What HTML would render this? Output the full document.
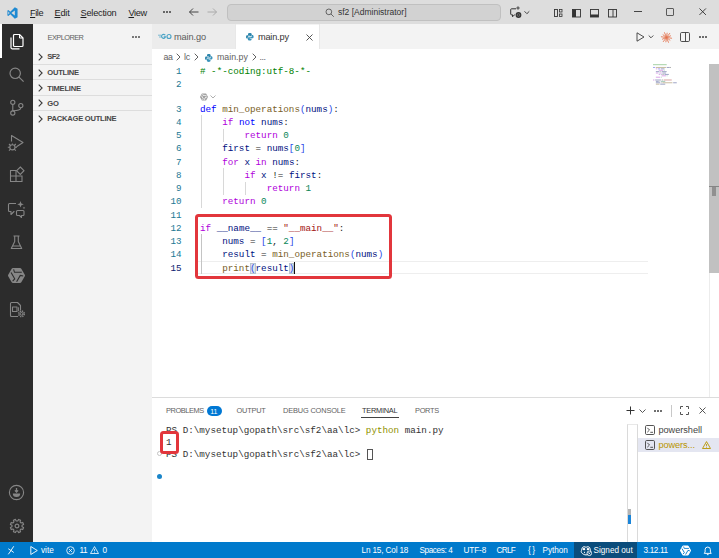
<!DOCTYPE html>
<html><head><meta charset="utf-8"><title>main.py - sf2 [Administrator]</title>
<style>
*{box-sizing:border-box;margin:0;padding:0}
html,body{width:719px;height:558px;overflow:hidden;background:#fff}
body{position:relative;font-family:"Liberation Sans",sans-serif;font-size:9px;color:#333}
.abs,.abs > *{position:absolute}
.t{position:absolute;white-space:pre;line-height:1}
svg{position:absolute;overflow:visible}
#title{left:0;top:0;width:719px;height:24.200px;background:#dddddd}
#act{left:0;top:24px;width:33px;height:518px;background:#2c2c2c}
#side{left:33px;top:24px;width:119px;height:518px;background:#f3f3f3}
#tabs{left:152px;top:24.200px;width:567px;height:24.600px;background:#f3f3f3}
#status{left:0;top:542.400px;width:719px;height:16px;background:#007acc;color:#fff}
.menu{top:8.5px;font-size:9.2px;color:#1e1e1e}
.sec{left:47.300px;font-size:7.600px;font-weight:bold;color:#474747;letter-spacing:-0.25px}
.chev{position:absolute;left:38px}
.sep{position:absolute;left:33px;width:119px;height:1px;background:#dddddd}
.code{position:absolute;left:200px;font-family:"Liberation Mono",monospace;font-size:9.250px;line-height:13.15px;white-space:pre;color:#1e1e1e;height:13.15px}
.ln{position:absolute;left:152px;width:29.5px;text-align:right;font-family:"Liberation Mono",monospace;font-size:9.2px;line-height:13.15px;color:#237893}
.k{color:#0000ff}.c{color:#af00db}.f{color:#795e26}.v{color:#001080}.n{color:#098658}.s{color:#a31515}.cm{color:#008000}.b1{color:#2748e8}.b2{color:#319331}
.bm{background:#dde4ec;outline:1px solid #b9c4d0;outline-offset:-1px}
.guide{position:absolute;width:1px;background:#d8d8d8}
.term{position:absolute;left:166px;font-family:"Liberation Mono",monospace;font-size:9.25px;line-height:12px;white-space:pre;color:#333}
.ptab{top:407px;font-size:7.4px;color:#616161;letter-spacing:-0.1px}
.st{top:546.5px;font-size:8.2px;color:#fff}
.red{position:absolute;border:3px solid #e2363c;border-radius:3.500px}
</style></head><body>
<!-- TITLE BAR -->
<div id="title" class="abs">
  <svg style="left:7px;top:6.700px" width="11" height="12" viewBox="0 0 100 100" preserveAspectRatio="none"><path d="M71 2 30 40 12 26 4 30v40l8 4 18-14 41 38 25-12V14zM12 62V38l12 12zm59 8L40 50l31-20z" fill="#1f8ad2"/></svg>
  <span class="t menu" style="left:30px;letter-spacing:-0.4px"><u>F</u>ile</span>
  <span class="t menu" style="left:54.5px;letter-spacing:-0.2px"><u>E</u>dit</span>
  <span class="t menu" style="left:80.5px;letter-spacing:-0.2px"><u>S</u>election</span>
  <span class="t menu" style="left:128.5px;letter-spacing:-0.4px"><u>V</u>iew</span>
  <svg style="left:163px;top:11.200px" width="8" height="2" viewBox="0 0 8 2" fill="#333"><circle cx="1" cy="1" r=".95"/><circle cx="4" cy="1" r=".95"/><circle cx="7" cy="1" r=".95"/></svg>
  <svg style="left:189px;top:8px" width="10" height="8" viewBox="0 0 10 8" fill="none" stroke="#444" stroke-width="1"><path d="M9.500 4h-9M4 .5l-3.500 3.500 3.500 3.500"/></svg>
  <svg style="left:206.500px;top:8px" width="10" height="8" viewBox="0 0 10 8" fill="none" stroke="#aaa" stroke-width="1"><path d="M.5 4h9M6 .5l3.500 3.500-3.500 3.500"/></svg>
  <div style="left:226.500px;top:3.500px;width:274.500px;height:17.500px;background:#d2d2d2;border:1px solid #c0c0c0;border-radius:4px"></div>
  <svg style="left:324.500px;top:7.500px" width="9.500" height="9.500" viewBox="0 0 16 16"><circle cx="6.500" cy="6.500" r="4.800" fill="none" stroke="#444" stroke-width="1.300"/><path d="M10 10l4.800 4.800" stroke="#444" stroke-width="1.300"/></svg>
  <span class="t" style="left:338px;top:8.300px;font-size:8.500px;color:#333;letter-spacing:0px">sf2 [Administrator]</span>
  <!-- right icons -->
  <svg style="left:509px;top:6px" width="24" height="13" viewBox="0 0 24 13"><path d="M7 2.800h-4.500a.8.800 0 0 0-.8.800v4.400a.8.800 0 0 0 .8.800h1v2l2-2h.5" fill="none" stroke="#333" stroke-width="1" stroke-linejoin="round"/><circle cx="9.500" cy="9" r="2.900" fill="#333"/><circle cx="9.500" cy="9" r="1.300" fill="none" stroke="#999" stroke-width=".5"/><path d="M9 .3v3.400M7.300 2h3.400" stroke="#333" stroke-width=".9"/><path d="M15.500 5.300l2.400 2.400 2.400-2.400" fill="none" stroke="#333" stroke-width=".9"/></svg>
  <svg style="left:553.500px;top:8.500px" width="9" height="9" viewBox="0 0 9 9" fill="none" stroke="#333" stroke-width=".9"><rect x=".5" y=".5" width="3" height="7"/><rect x="5.500" y=".5" width="2.500" height="2.500" stroke-width=".8"/><rect x="5.500" y="5" width="2.500" height="2.500" stroke-width=".8"/></svg>
  <svg style="left:571.500px;top:8.500px" width="9" height="9" viewBox="0 0 9 9"><rect x=".5" y=".5" width="8" height="7.500" fill="none" stroke="#333" stroke-width=".9"/><rect x=".5" y=".5" width="3.500" height="7.500" fill="#333"/></svg>
  <svg style="left:589.500px;top:8.500px" width="9" height="9" viewBox="0 0 9 9"><rect x=".5" y=".5" width="8" height="7.500" fill="none" stroke="#333" stroke-width=".9"/><rect x=".5" y="5.500" width="8" height="2.500" fill="#333"/></svg>
  <svg style="left:607.500px;top:8.500px" width="9" height="9" viewBox="0 0 9 9"><rect x=".5" y=".5" width="8" height="7.500" fill="none" stroke="#333" stroke-width=".9"/><path d="M5 .5v7.500" stroke="#333" stroke-width=".9"/></svg>
  <div style="left:634px;top:11px;width:8px;height:1px;background:#444"></div>
  <div style="left:666.300px;top:8.200px;width:7.500px;height:7.500px;border:1px solid #5a5a5a;border-radius:1px"></div>
  <svg style="left:698.700px;top:8.200px" width="7.400" height="7.400" viewBox="0 0 8 8"><path d="M.5.5l7 7M7.500.5l-7 7" stroke="#333" stroke-width="1"/></svg>
</div>
<!-- ACTIVITY BAR -->
<div id="act" class="abs">
  <div style="left:0;top:0;width:2px;height:33.700px;background:#fff"></div>
  <!-- files -->
  <svg style="left:8.500px;top:9px" width="16" height="16" viewBox="0 0 16 16" fill="none" stroke="#fff" stroke-width="1.200" stroke-linejoin="round"><path d="M5.500 1.500h5l3.500 3.500v7.500a1 1 0 0 1-1 1h-7.500a1 1 0 0 1-1-1v-10a1 1 0 0 1 1-1z"/><path d="M10.500 1.500v3.500h3.500" stroke-width="1"/><path d="M2 4.500v10a1.300 1.300 0 0 0 1.300 1.300h7.200"/></svg>
  <!-- search -->
  <svg style="left:8px;top:42px" width="17" height="17" viewBox="0 0 17 17" fill="none" stroke="#868686" stroke-width="1.200"><circle cx="7.200" cy="7.300" r="5.200"/><path d="M11 11.100l4.600 4.600"/></svg>
  <!-- scm -->
  <svg style="left:8px;top:74px" width="17" height="18" viewBox="0 0 17 18" fill="none" stroke="#868686" stroke-width="1.100"><circle cx="4.800" cy="4.300" r="2.100"/><circle cx="12.800" cy="7.600" r="2.100"/><circle cx="4.800" cy="15" r="2.100"/><path d="M4.800 6.400v6.500M12.800 9.700c0 2.500-3 2.800-8 3"/></svg>
  <!-- debug -->
  <svg style="left:7px;top:109px" width="18" height="20" viewBox="0 0 18 20" fill="none" stroke="#868686" stroke-width="1.100" stroke-linejoin="round"><path d="M4.500 8.500v-6l11.500 7-6.500 4.200"/><circle cx="5.400" cy="14.300" r="2.600"/><path d="M5.400 11.700v-1.300M2.800 14.300h-2M8 14.300h2M3.500 12.500l-1.500-1.500M7.300 12.500l1.500-1.500M3.500 16.200l-1.500 1.500M7.300 16.200l1.500 1.500"/></svg>
  <!-- extensions -->
  <svg style="left:9px;top:142px" width="16" height="16" viewBox="0 0 16 16" fill="none" stroke="#868686" stroke-width="1.100"><path d="M1.500 4.500h5.500v11h-5.500zM1.500 10h11.500v5.500h-11.500M13 10v5.500"/><path d="M11.300 1l3.700 3.700-3.700 3.700-3.700-3.700z"/></svg>
  <!-- chat sparkle -->
  <svg style="left:7px;top:175.500px" width="19" height="19" viewBox="0 0 19 19" fill="none" stroke="#868686" stroke-width="1.100" stroke-linejoin="round"><path d="M9 3.500h-6.500a1 1 0 0 0-1 1v6a1 1 0 0 0 1 1h1.500v3l3-3h.5"/><path d="M10.500 10.500h5.500a1 1 0 0 1 1 1v3a1 1 0 0 1-1 1h-1.500v2l-2-2h-2a1 1 0 0 1-1-1v-3a1 1 0 0 1 1-1z"/><path d="M13.500 1l.9 2.400 2.400.9-2.400.9-.9 2.400-.9-2.400-2.400-.9 2.400-.9z" fill="#868686" stroke="none"/><path d="M17 6.500l.4 1 1 .4-1 .4-.4 1-.4-1-1-.4 1-.4z" fill="#868686" stroke="none"/></svg>
  <!-- flask -->
  <svg style="left:10px;top:210.500px" width="13" height="15" viewBox="0 0 13 15" fill="none" stroke="#868686" stroke-width="1.100" stroke-linejoin="round"><path d="M3.500 1h6M4.700 1v5.500l-3.400 7h10.400l-3.400-7v-5.500M2.500 11h8"/></svg>
  <!-- lingma -->
  <svg style="left:8px;top:242.500px" width="17" height="17" viewBox="-8.500 -8.500 17 17"><polygon points="7,0 3.500,6.060 -3.500,6.060 -7,0 -3.500,-6.060 3.500,-6.060" fill="#868686" stroke="#868686" stroke-width="3" stroke-linejoin="round"/><g fill="none" stroke="#2c2c2c" stroke-width="1.100"><path id="lgp" d="M-2.900-6.100l.9 2.900h7.300"/><use href="#lgp" transform="rotate(120)"/><use href="#lgp" transform="rotate(240)"/></g></svg>
  <!-- doc gear -->
  <svg style="left:9px;top:276.500px" width="17" height="17" viewBox="0 0 17 17" fill="none" stroke="#868686" stroke-width="1.100" stroke-linejoin="round"><path d="M9 15.500h-6.500a1 1 0 0 1-1-1v-12a1 1 0 0 1 1-1h6l3 3v4.500"/><rect x="3.500" y="6" width="4.500" height="4.500"/><path d="M9.500 6.300v3.900" stroke-width=".9"/><circle cx="12.500" cy="12.800" r="2.700" stroke-width="1.700" stroke-dasharray="1.300 0.820"/><circle cx="12.500" cy="12.800" r="1.300" stroke-width="1"/></svg>
  <!-- account -->
  <svg style="left:8px;top:459.500px" width="17" height="17" viewBox="0 0 17 17" fill="none" stroke="#868686" stroke-width="1.100"><circle cx="8.500" cy="8.500" r="7.100"/><path d="M8.500 4v4M6.900 6.400l1.600 1.700 1.600-1.700" stroke-width="1.300"/><path d="M4.800 9.600a3.700 3.500 0 0 0 7.400 0z" fill="#868686" stroke="none"/></svg>
  <!-- gear -->
  <svg style="left:8.500px;top:494px" width="16" height="16" viewBox="-8.500 -8.500 17 17" fill="none" stroke="#868686" stroke-width="1.200" stroke-linejoin="round"><path transform="rotate(22.500)" d="M5.240 -1.300 L7.100 -1.180 L7.100 1.180 L5.240 1.300 L4.630 2.790 L5.860 4.190 L4.190 5.860 L2.790 4.630 L1.300 5.240 L1.180 7.100 L-1.180 7.100 L-1.300 5.240 L-2.790 4.630 L-4.190 5.860 L-5.860 4.190 L-4.630 2.790 L-5.240 1.300 L-7.100 1.180 L-7.100 -1.180 L-5.240 -1.300 L-4.630 -2.790 L-5.860 -4.190 L-4.190 -5.860 L-2.790 -4.630 L-1.300 -5.240 L-1.180 -7.100 L1.180 -7.100 L1.300 -5.240 L2.790 -4.630 L4.190 -5.860 L5.860 -4.190 L4.630 -2.790Z"/><circle r="2" /></svg>
</div>
<!-- SIDEBAR -->
<div id="side" class="abs"></div>
<span class="t" style="left:47.5px;top:33.500px;font-size:7.400px;color:#5f5f5f;letter-spacing:-0.55px">EXPLORER</span>
<svg style="left:132px;top:36px" width="8" height="2" viewBox="0 0 8 2" fill="#444"><circle cx="1" cy="1" r=".95"/><circle cx="4" cy="1" r=".95"/><circle cx="7" cy="1" r=".95"/></svg>
<svg class="chev" style="top:53px" width="5" height="8" viewBox="0 0 5 8" fill="none" stroke="#3b3b3b" stroke-width="1.100"><path d="M.7.700l3.400 3.300-3.400 3.300"/></svg>
<span class="t sec" style="top:53px;letter-spacing:-0.6px">SF2</span>
<div class="sep" style="top:63.500px"></div>
<svg class="chev" style="top:68.500px" width="5" height="8" viewBox="0 0 5 8" fill="none" stroke="#3b3b3b" stroke-width="1.100"><path d="M.7.700l3.400 3.300-3.400 3.300"/></svg>
<span class="t sec" style="top:68.800px">OUTLINE</span>
<div class="sep" style="top:79px"></div>
<svg class="chev" style="top:84px" width="5" height="8" viewBox="0 0 5 8" fill="none" stroke="#3b3b3b" stroke-width="1.100"><path d="M.7.700l3.400 3.300-3.400 3.300"/></svg>
<span class="t sec" style="top:84.700px">TIMELINE</span>
<div class="sep" style="top:94.500px"></div>
<svg class="chev" style="top:99px" width="5" height="8" viewBox="0 0 5 8" fill="none" stroke="#3b3b3b" stroke-width="1.100"><path d="M.7.700l3.400 3.300-3.400 3.300"/></svg>
<span class="t sec" style="top:99.800px">GO</span>
<div class="sep" style="top:110px"></div>
<svg class="chev" style="top:114.500px" width="5" height="8" viewBox="0 0 5 8" fill="none" stroke="#3b3b3b" stroke-width="1.100"><path d="M.7.700l3.400 3.300-3.400 3.300"/></svg>
<span class="t sec" style="top:114.700px">PACKAGE OUTLINE</span>
<!-- TABS -->
<div id="tabs" class="abs">
  <div style="left:0;top:0;width:83px;height:24.600px;background:#ececec"></div>
  <div style="left:83.300px;top:0.500px;width:83.500px;height:24.600px;background:#fff"></div>
  <div style="left:82.500px;top:0;width:1px;height:24.600px;background:#e8e8e8"></div>
  <div style="left:166.500px;top:0;width:1px;height:24.600px;background:#e8e8e8"></div>
</div>
<!-- go icon -->
<svg style="left:158px;top:33px" width="14" height="7" viewBox="0 0 14 7" fill="none" stroke="#4aa3c6" stroke-width="1.150"><path d="M0 2.200h3M1 4h2" stroke-width=".7"/><path d="M7.300 2.300a2 2 0 1 0 .2 1.600h-1.800"/><circle cx="11" cy="3.500" r="2"/></svg>
<span class="t" style="left:174px;top:33px;font-size:9.200px;color:#5a5a5a;letter-spacing:-0.08px">main.go</span>
<!-- python icon -->
<svg style="left:245.600px;top:32.600px" width="7.600" height="7.600" viewBox="0 0 9 9"><path d="M4.400 0c-1.300 0-2 .5-2 1.300v1h2.200v.5h-3.300c-.8 0-1.300.7-1.300 1.900 0 1.100.5 1.800 1.300 1.800h.8v-1.200c0-.8.600-1.400 1.400-1.400h2.200c.6 0 1.100-.5 1.100-1.100v-1.500c0-.8-.8-1.300-2.400-1.300z" fill="#2e86ad"/><path d="M4.600 9c1.300 0 2-.5 2-1.300v-1h-2.200v-.5h3.300c.8 0 1.300-.7 1.300-1.900 0-1.100-.5-1.800-1.300-1.800h-.8v1.200c0 .8-.6 1.400-1.400 1.400h-2.200c-.6 0-1.100.5-1.100 1.100v1.500c0 .8.800 1.300 2.400 1.300z" fill="#3a93ba"/></svg>
<span class="t" style="left:258px;top:33px;font-size:9.200px;color:#333;letter-spacing:-0.2px">main.py</span>
<svg style="left:305.500px;top:33.500px" width="7" height="7" viewBox="0 0 7 7"><path d="M.5.500l6 6M6.500.5l-6 6" stroke="#444" stroke-width=".9"/></svg>
<!-- editor actions -->
<svg style="left:635.800px;top:32px" width="20" height="10" viewBox="0 0 20 10" fill="none" stroke="#3c3c3c" stroke-width=".9" stroke-linejoin="round"><path d="M1 .8l7 4.200-7 4.200z"/><path d="M12.700 3.500l2.300 2.300 2.300-2.300" stroke-width=".9"/></svg>
<svg style="left:661.300px;top:31.500px" width="11" height="11" viewBox="-5.500 -5.500 11 11" stroke="#e3704a" stroke-width=".85" stroke-linecap="round"><path d="M0 0L5.15 0.72M0 0L3.47 2.71M0 0L1.95 4.82M0 0L-0.61 4.36M0 0L-3.20 4.10M0 0L-4.08 1.65M0 0L-5.15 -0.72M0 0L-3.47 -2.71M0 0L-1.95 -4.82M0 0L0.61 -4.36M0 0L3.20 -4.10M0 0L4.08 -1.65"/></svg>
<svg style="left:680px;top:32px" width="10" height="10" viewBox="0 0 10 10" fill="none" stroke="#3c3c3c" stroke-width=".9"><rect x=".5" y=".5" width="9" height="9" rx="1.200"/><path d="M5.500 .5v9"/></svg>
<svg style="left:699px;top:36px" width="8" height="2" viewBox="0 0 8 2" fill="#333"><circle cx="1" cy="1" r=".95"/><circle cx="4" cy="1" r=".95"/><circle cx="7" cy="1" r=".95"/></svg>
<!-- breadcrumbs -->
<span class="t" style="left:163.500px;top:53px;font-size:8.800px;color:#616161;letter-spacing:-0.3px">aa</span>
<svg style="left:176px;top:53px" width="5" height="8" viewBox="0 0 5 8" fill="none" stroke="#616161" stroke-width="1"><path d="M.7.700l3.300 3.300-3.300 3.300"/></svg>
<span class="t" style="left:184px;top:53px;font-size:8.800px;color:#616161;letter-spacing:-0.2px">lc</span>
<svg style="left:193.500px;top:53px" width="5" height="8" viewBox="0 0 5 8" fill="none" stroke="#616161" stroke-width="1"><path d="M.7.700l3.300 3.300-3.300 3.300"/></svg>
<svg style="left:205px;top:53.500px" width="7.500" height="8" preserveAspectRatio="none" viewBox="0 0 9 9"><path d="M4.400 0c-1.300 0-2 .5-2 1.300v1h2.200v.5h-3.300c-.8 0-1.300.7-1.300 1.900 0 1.100.5 1.800 1.300 1.800h.8v-1.200c0-.8.600-1.400 1.400-1.400h2.200c.6 0 1.100-.5 1.100-1.100v-1.500c0-.8-.8-1.300-2.400-1.300z" fill="#2e86ad"/><path d="M4.600 9c1.300 0 2-.5 2-1.300v-1h-2.200v-.5h3.300c.8 0 1.300-.7 1.300-1.900 0-1.100-.5-1.800-1.300-1.800h-.8v1.200c0 .8-.6 1.400-1.400 1.400h-2.200c-.6 0-1.100.5-1.100 1.100v1.500c0 .8.800 1.300 2.400 1.300z" fill="#3a93ba"/></svg>
<span class="t" style="left:217px;top:53px;font-size:8.800px;color:#616161;letter-spacing:0px">main.py</span>
<svg style="left:251.500px;top:53px" width="5" height="8" viewBox="0 0 5 8" fill="none" stroke="#616161" stroke-width="1"><path d="M.7.700l3.300 3.300-3.300 3.300"/></svg>
<span class="t" style="left:259.500px;top:53px;font-size:8.800px;color:#616161;letter-spacing:-0.4px">...</span>
<!-- CODE -->
<div id="code">
<div style="position:absolute;left:196px;top:261px;width:452px;height:13px;border-top:1px solid #eeeeee;border-bottom:1px solid #eeeeee"></div>
<div class="guide" style="left:200.5px;top:115.4px;height:92.5px;background:#d8d8d8"></div>
<div class="guide" style="left:222.6px;top:128.6px;height:13.2px;background:#d8d8d8"></div>
<div class="guide" style="left:222.6px;top:168.3px;height:26.4px;background:#d8d8d8"></div>
<div class="guide" style="left:244.7px;top:181.5px;height:13.2px;background:#d8d8d8"></div>
<div class="guide" style="left:200.5px;top:234.4px;height:39.6px;background:#c4c4c4"></div>
<div class="ln" style="top:64.9px">1</div><div class="code" style="top:64.9px"><span class="cm"># -*-coding:utf-8-*-</span></div>
<div class="ln" style="top:78.2px">2</div><div class="code" style="top:78.2px"></div>
<div class="ln" style="top:102.7px">3</div><div class="code" style="top:102.7px"><span class="k">def</span> <span class="f">min_operations</span><span class="b1">(</span><span class="v">nums</span><span class="b1">)</span>:</div>
<div class="ln" style="top:115.9px">4</div><div class="code" style="top:115.9px">    <span class="c">if</span> <span class="k">not</span> <span class="v">nums</span>:</div>
<div class="ln" style="top:129.2px">5</div><div class="code" style="top:129.2px">        <span class="c">return</span> <span class="n">0</span></div>
<div class="ln" style="top:142.4px">6</div><div class="code" style="top:142.4px">    <span class="v">first</span> = <span class="v">nums</span><span class="b1">[</span><span class="n">0</span><span class="b1">]</span></div>
<div class="ln" style="top:155.6px">7</div><div class="code" style="top:155.6px">    <span class="c">for</span> <span class="v">x</span> <span class="c">in</span> <span class="v">nums</span>:</div>
<div class="ln" style="top:168.9px">8</div><div class="code" style="top:168.9px">        <span class="c">if</span> <span class="v">x</span> != <span class="v">first</span>:</div>
<div class="ln" style="top:182.1px">9</div><div class="code" style="top:182.1px">            <span class="c">return</span> <span class="n">1</span></div>
<div class="ln" style="top:195.3px">10</div><div class="code" style="top:195.3px">    <span class="c">return</span> <span class="n">0</span></div>
<div class="ln" style="top:208.5px">11</div><div class="code" style="top:208.5px"></div>
<div class="ln" style="top:221.8px">12</div><div class="code" style="top:221.8px"><span class="c">if</span> <span class="v">__name__</span> == <span class="s">"__main__"</span>:</div>
<div class="ln" style="top:235.0px">13</div><div class="code" style="top:235.0px">    <span class="v">nums</span> = <span class="b1">[</span><span class="n">1</span>, <span class="n">2</span><span class="b1">]</span></div>
<div class="ln" style="top:248.2px">14</div><div class="code" style="top:248.2px">    <span class="v">result</span> = <span class="f">min_operations</span><span class="b1">(</span><span class="v">nums</span><span class="b1">)</span></div>
<div class="ln" style="top:261.5px;color:#0b216f">15</div><div class="code" style="top:261.5px">    <span class="f">print</span><span class="bm b1">(</span><span class="v">result</span><span class="bm b1">)</span></div>
</div>
<!-- codelens -->
<svg style="left:200px;top:92.500px" width="8" height="8" viewBox="-8.500 -8.500 17 17"><polygon points="7,0 3.500,6.060 -3.500,6.060 -7,0 -3.500,-6.060 3.500,-6.060" fill="#a0a0a0" stroke="#a0a0a0" stroke-width="3" stroke-linejoin="round"/><g fill="none" stroke="#fff" stroke-width="1.500"><path id="clp" d="M-2.900-6.100l.9 2.900h7.300"/><use href="#clp" transform="rotate(120)"/><use href="#clp" transform="rotate(240)"/></g></svg>
<svg style="left:210px;top:95px" width="6" height="4" viewBox="0 0 6 4" fill="none" stroke="#9a9a9a" stroke-width=".8"><path d="M.5.500l2.500 2.500 2.500-2.500"/></svg>
<!-- cursor -->
<div style="position:absolute;left:294.200px;top:261.500px;width:1.300px;height:12px;background:#111"></div>
<!-- red annotation -->
<div class="red" style="left:194.800px;top:214px;width:197px;height:65px"></div>
<!-- minimap -->
<svg style="left:653px;top:64px" width="28" height="22" viewBox="0 0 28 22" opacity=".7"><g stroke-width=".8"><path d="M0.00 0.70h13.68" stroke="#5fae5f"/><path d="M0.00 3.48h2.16" stroke="#5a5ae8"/><path d="M2.88 3.48h10.08" stroke="#a08a5a"/><path d="M13.68 3.48h2.88" stroke="#55609a"/><path d="M16.56 3.48h1.44" stroke="#777"/><path d="M2.88 4.87h1.44" stroke="#c060d8"/><path d="M5.04 4.87h2.16" stroke="#5a5ae8"/><path d="M7.92 4.87h3.60" stroke="#55609a"/><path d="M5.76 6.26h4.32" stroke="#c060d8"/><path d="M10.80 6.26h0.72" stroke="#5aa080"/><path d="M2.88 7.65h3.60" stroke="#55609a"/><path d="M7.20 7.65h0.72" stroke="#777"/><path d="M8.64 7.65h5.04" stroke="#55609a"/><path d="M2.88 9.04h2.16" stroke="#c060d8"/><path d="M5.76 9.04h0.72" stroke="#55609a"/><path d="M7.20 9.04h1.44" stroke="#c060d8"/><path d="M9.36 9.04h3.60" stroke="#55609a"/><path d="M5.76 10.43h1.44" stroke="#c060d8"/><path d="M7.92 10.43h0.72" stroke="#55609a"/><path d="M9.36 10.43h1.44" stroke="#777"/><path d="M11.52 10.43h4.32" stroke="#55609a"/><path d="M8.64 11.82h4.32" stroke="#c060d8"/><path d="M13.68 11.82h0.72" stroke="#5aa080"/><path d="M2.88 13.21h4.32" stroke="#c060d8"/><path d="M7.92 13.21h0.72" stroke="#5aa080"/><path d="M0.00 15.99h1.44" stroke="#c060d8"/><path d="M2.16 15.99h5.76" stroke="#55609a"/><path d="M8.64 15.99h1.44" stroke="#777"/><path d="M10.80 15.99h7.92" stroke="#c05a5a"/><path d="M2.88 17.38h2.88" stroke="#55609a"/><path d="M6.48 17.38h0.72" stroke="#777"/><path d="M7.92 17.38h4.32" stroke="#5aa080"/><path d="M2.88 18.77h4.32" stroke="#55609a"/><path d="M7.92 18.77h0.72" stroke="#777"/><path d="M9.36 18.77h10.08" stroke="#a08a5a"/><path d="M20.16 18.77h3.60" stroke="#55609a"/><path d="M2.88 20.16h3.60" stroke="#a08a5a"/><path d="M7.20 20.16h5.04" stroke="#55609a"/></g></svg>
<!-- scrollbar -->
<div style="position:absolute;left:708.500px;top:64px;width:1px;height:334px;background:#ececec"></div>
<div style="position:absolute;left:709px;top:64px;width:10px;height:209px;background:#c1c1c1"></div>
<div style="position:absolute;left:709px;top:186.300px;width:10px;height:1px;background:#858585"></div>
<div style="position:absolute;left:712.300px;top:187px;width:4px;height:8.500px;background:#909090"></div>
<!-- PANEL -->
<div style="position:absolute;left:152px;top:397px;width:567px;height:1px;background:#dcdcdc"></div>
<span class="t ptab" style="left:166px;letter-spacing:-0.4px">PROBLEMS</span>
<div style="position:absolute;left:207px;top:406px;width:14.500px;height:9.500px;border-radius:5px;background:#0078d4"></div>
<span class="t" style="left:210.300px;top:407.500px;font-size:7px;color:#fff;letter-spacing:-0.2px">11</span>
<span class="t ptab" style="left:236.500px;letter-spacing:-0.2px">OUTPUT</span>
<span class="t ptab" style="left:283px;letter-spacing:-0.15px">DEBUG CONSOLE</span>
<span class="t ptab" style="left:362px;color:#333;letter-spacing:-0.25px">TERMINAL</span>
<span class="t ptab" style="left:415px;letter-spacing:-0.3px">PORTS</span>
<div style="position:absolute;left:360.500px;top:417px;width:38.500px;height:1px;background:#424242"></div>
<div class="term" style="top:424.500px">PS D:\mysetup\gopath\src\sf2\aa\lc&gt; <span style="color:#8f9100">python</span> main.py</div>
<div class="term" style="top:437px">1</div>
<div class="term" style="top:449px">PS D:\mysetup\gopath\src\sf2\aa\lc&gt; </div>
<div style="position:absolute;left:367px;top:448.500px;width:5.500px;height:11px;border:1px solid #555"></div>
<!-- decorations -->
<div style="position:absolute;left:156.700px;top:450.500px;width:5.300px;height:5.300px;border:1px solid #c4c4c4;border-radius:50%"></div>
<div style="position:absolute;left:157px;top:473.500px;width:5px;height:5px;background:#1a85c9;border-radius:50%"></div>
<div class="red" style="left:159.700px;top:431px;width:19.200px;height:22.500px"></div>
<!-- panel actions -->
<svg style="left:625.500px;top:406px" width="9" height="9" viewBox="0 0 9 9" stroke="#333" stroke-width="1"><path d="M4.500 .5v8M.5 4.500h8"/></svg>
<svg style="left:638.500px;top:408.500px" width="7" height="4" viewBox="0 0 7 4" fill="none" stroke="#444" stroke-width=".9"><path d="M.5.500l3 3 3-3"/></svg>
<svg style="left:653.500px;top:409.500px" width="8" height="2" viewBox="0 0 8 2" fill="#333"><circle cx="1" cy="1" r=".95"/><circle cx="4" cy="1" r=".95"/><circle cx="7" cy="1" r=".95"/></svg>
<div style="position:absolute;left:671px;top:405px;width:1px;height:11.500px;background:#c8c8c8"></div>
<svg style="left:680px;top:406px" width="9" height="9" viewBox="0 0 9 9" fill="none" stroke="#444" stroke-width=".9"><path d="M.5 3v-2.500h2.500M6 .5h2.500v2.500M8.500 6v2.500h-2.500M3 8.500h-2.500v-2.500"/></svg>
<svg style="left:699px;top:406.500px" width="7" height="7" viewBox="0 0 7 7"><path d="M.5.500l6 6M6.500.5l-6 6" stroke="#444" stroke-width=".9"/></svg>
<!-- terminal scrollbar + list -->
<div style="position:absolute;left:627px;top:423.500px;width:10.500px;height:119px;border-left:1px solid #dadada;border-right:1px solid #dadada;border-top:1px solid #e8e8e8"></div>
<div style="position:absolute;left:627.500px;top:508.500px;width:3px;height:7px;background:#b4b4b4"></div>
<div style="position:absolute;left:627.500px;top:515px;width:3px;height:9px;background:#1a85d9"></div>
<div style="position:absolute;left:638px;top:437.500px;width:81px;height:14.500px;background:#e4e6f1"></div>
<svg style="left:645px;top:425px" width="10" height="10" viewBox="0 0 10 10" fill="none" stroke="#424242" stroke-width=".9"><rect x=".5" y=".5" width="9" height="9" rx="1.200"/><path d="M2.300 2.800l2.200 2.200-2.200 2.200M5.300 7.300h2.700"/></svg>
<span class="t" style="left:658.500px;top:425.500px;font-size:9.200px;color:#444;letter-spacing:-0.05px">powershell</span>
<svg style="left:645px;top:440px" width="10" height="10" viewBox="0 0 10 10" fill="none" stroke="#424242" stroke-width=".9"><rect x=".5" y=".5" width="9" height="9" rx="1.200"/><path d="M2.300 2.800l2.200 2.200-2.200 2.200M5.300 7.300h2.700"/></svg>
<span class="t" style="left:658.500px;top:440.500px;font-size:9.200px;color:#b89500;letter-spacing:-0.1px">powers...</span>
<svg style="left:701.500px;top:441px" width="9" height="8" viewBox="0 0 9 8" fill="none" stroke="#b89500" stroke-width=".9" stroke-linejoin="round"><path d="M4.500 .6l4 6.900h-8z"/><path d="M4.500 3v2.300M4.500 6v.7" stroke-width=".8"/></svg>
<!-- STATUS -->
<div id="status" class="abs">
  <div style="left:573.500px;top:0;width:63px;height:16px;background:#0b4d7c"></div>
</div>
<svg style="left:0;top:542px" width="22" height="16" viewBox="0 542 22 16" fill="none" stroke="#fff" stroke-width=".9" stroke-linejoin="round"><path d="M8.300 548.750L11 550.600L8.300 554.300M13.750 546.250L11 550.400L13.750 552.500"/></svg>
<svg style="left:30px;top:546px" width="8" height="9" viewBox="0 0 8 9" fill="none" stroke="#fff" stroke-width=".9" stroke-linejoin="round"><path d="M.8 .5l6.500 4-6.500 4z"/></svg>
<span class="t st" style="left:41px">vite</span>
<svg style="left:66.300px;top:546px" width="9" height="9" viewBox="0 0 9 9" fill="none" stroke="#fff" stroke-width=".8"><circle cx="4.500" cy="4.500" r="3.800"/><path d="M2.800 2.800l3.400 3.400M6.200 2.800l-3.400 3.400"/></svg>
<span class="t st" style="left:79.500px;letter-spacing:-0.5px">11</span>
<svg style="left:90px;top:546.300px" width="9" height="8" viewBox="0 0 9 8" fill="none" stroke="#fff" stroke-width=".8" stroke-linejoin="round"><path d="M4.500 .6l4 6.900h-8z"/><path d="M4.500 3v2.300M4.500 6v.7" stroke-width=".7"/></svg>
<span class="t st" style="left:102.500px">0</span>
<span class="t st" style="left:361.500px;letter-spacing:-0.15px">Ln 15, Col 18</span>
<span class="t st" style="left:419.500px;letter-spacing:-0.4px">Spaces: 4</span>
<span class="t st" style="left:463.500px;letter-spacing:-0.1px">UTF-8</span>
<span class="t st" style="left:496.500px;letter-spacing:-0.7px">CRLF</span>
<span class="t st" style="left:528px;top:545.500px;letter-spacing:1.5px;font-size:8.600px">{}</span>
<span class="t st" style="left:542.500px;letter-spacing:-0.05px">Python</span>
<svg style="left:579.500px;top:545.500px" width="12" height="10" viewBox="0 0 12 10" fill="none" stroke="#fff" stroke-width="1"><path d="M6 1.400c1-.9 3.200-.9 3.800.4.400.9.200 1.700.6 2.400.5.800.6 1.700 0 2.500-1 1.300-2.700 2.200-4.400 2.200s-3.400-.9-4.400-2.200c-.6-.8-.5-1.700 0-2.500.4-.7.200-1.500.6-2.400.6-1.300 2.800-1.300 3.800-.4z"/><ellipse cx="4" cy="3.200" rx="1.300" ry="1.100" fill="#fff" stroke="none"/><ellipse cx="8" cy="3.200" rx="1.300" ry="1.100" fill="#fff" stroke="none"/><path d="M4.500 5.800v1.300M7.500 5.800v1.300" stroke-width=".9"/><circle cx="9.300" cy="7.300" r="2.300" fill="#0b4d7c" stroke="#fff" stroke-width=".8"/><path d="M8.300 6.300l2 2M10.300 6.300l-2 2" stroke-width=".7"/></svg>
<span class="t st" style="left:593.500px">Signed out</span>
<span class="t st" style="left:643.500px;letter-spacing:-0.35px">3.12.11</span>
<svg style="left:679.700px;top:545px" width="11" height="11" viewBox="-8.500 -8.500 17 17"><polygon points="7,0 3.500,6.060 -3.500,6.060 -7,0 -3.500,-6.060 3.500,-6.060" fill="#fff" stroke="#fff" stroke-width="3" stroke-linejoin="round"/><g fill="none" stroke="#007acc" stroke-width="1.300"><path id="slp" d="M-2.900-6.100l.9 2.900h7.300"/><use href="#slp" transform="rotate(120)"/><use href="#slp" transform="rotate(240)"/></g></svg>
<svg style="left:703px;top:545.800px" width="9.500" height="9.500" viewBox="0 0 9 9" fill="none" stroke="#fff" stroke-width=".9" stroke-linejoin="round"><path d="M1.200 7h6.600l-.8-1.300v-2.200a2.500 2.500 0 0 0-5 0v2.200z"/><path d="M3.700 8.200h1.600"/></svg>
</body></html>
